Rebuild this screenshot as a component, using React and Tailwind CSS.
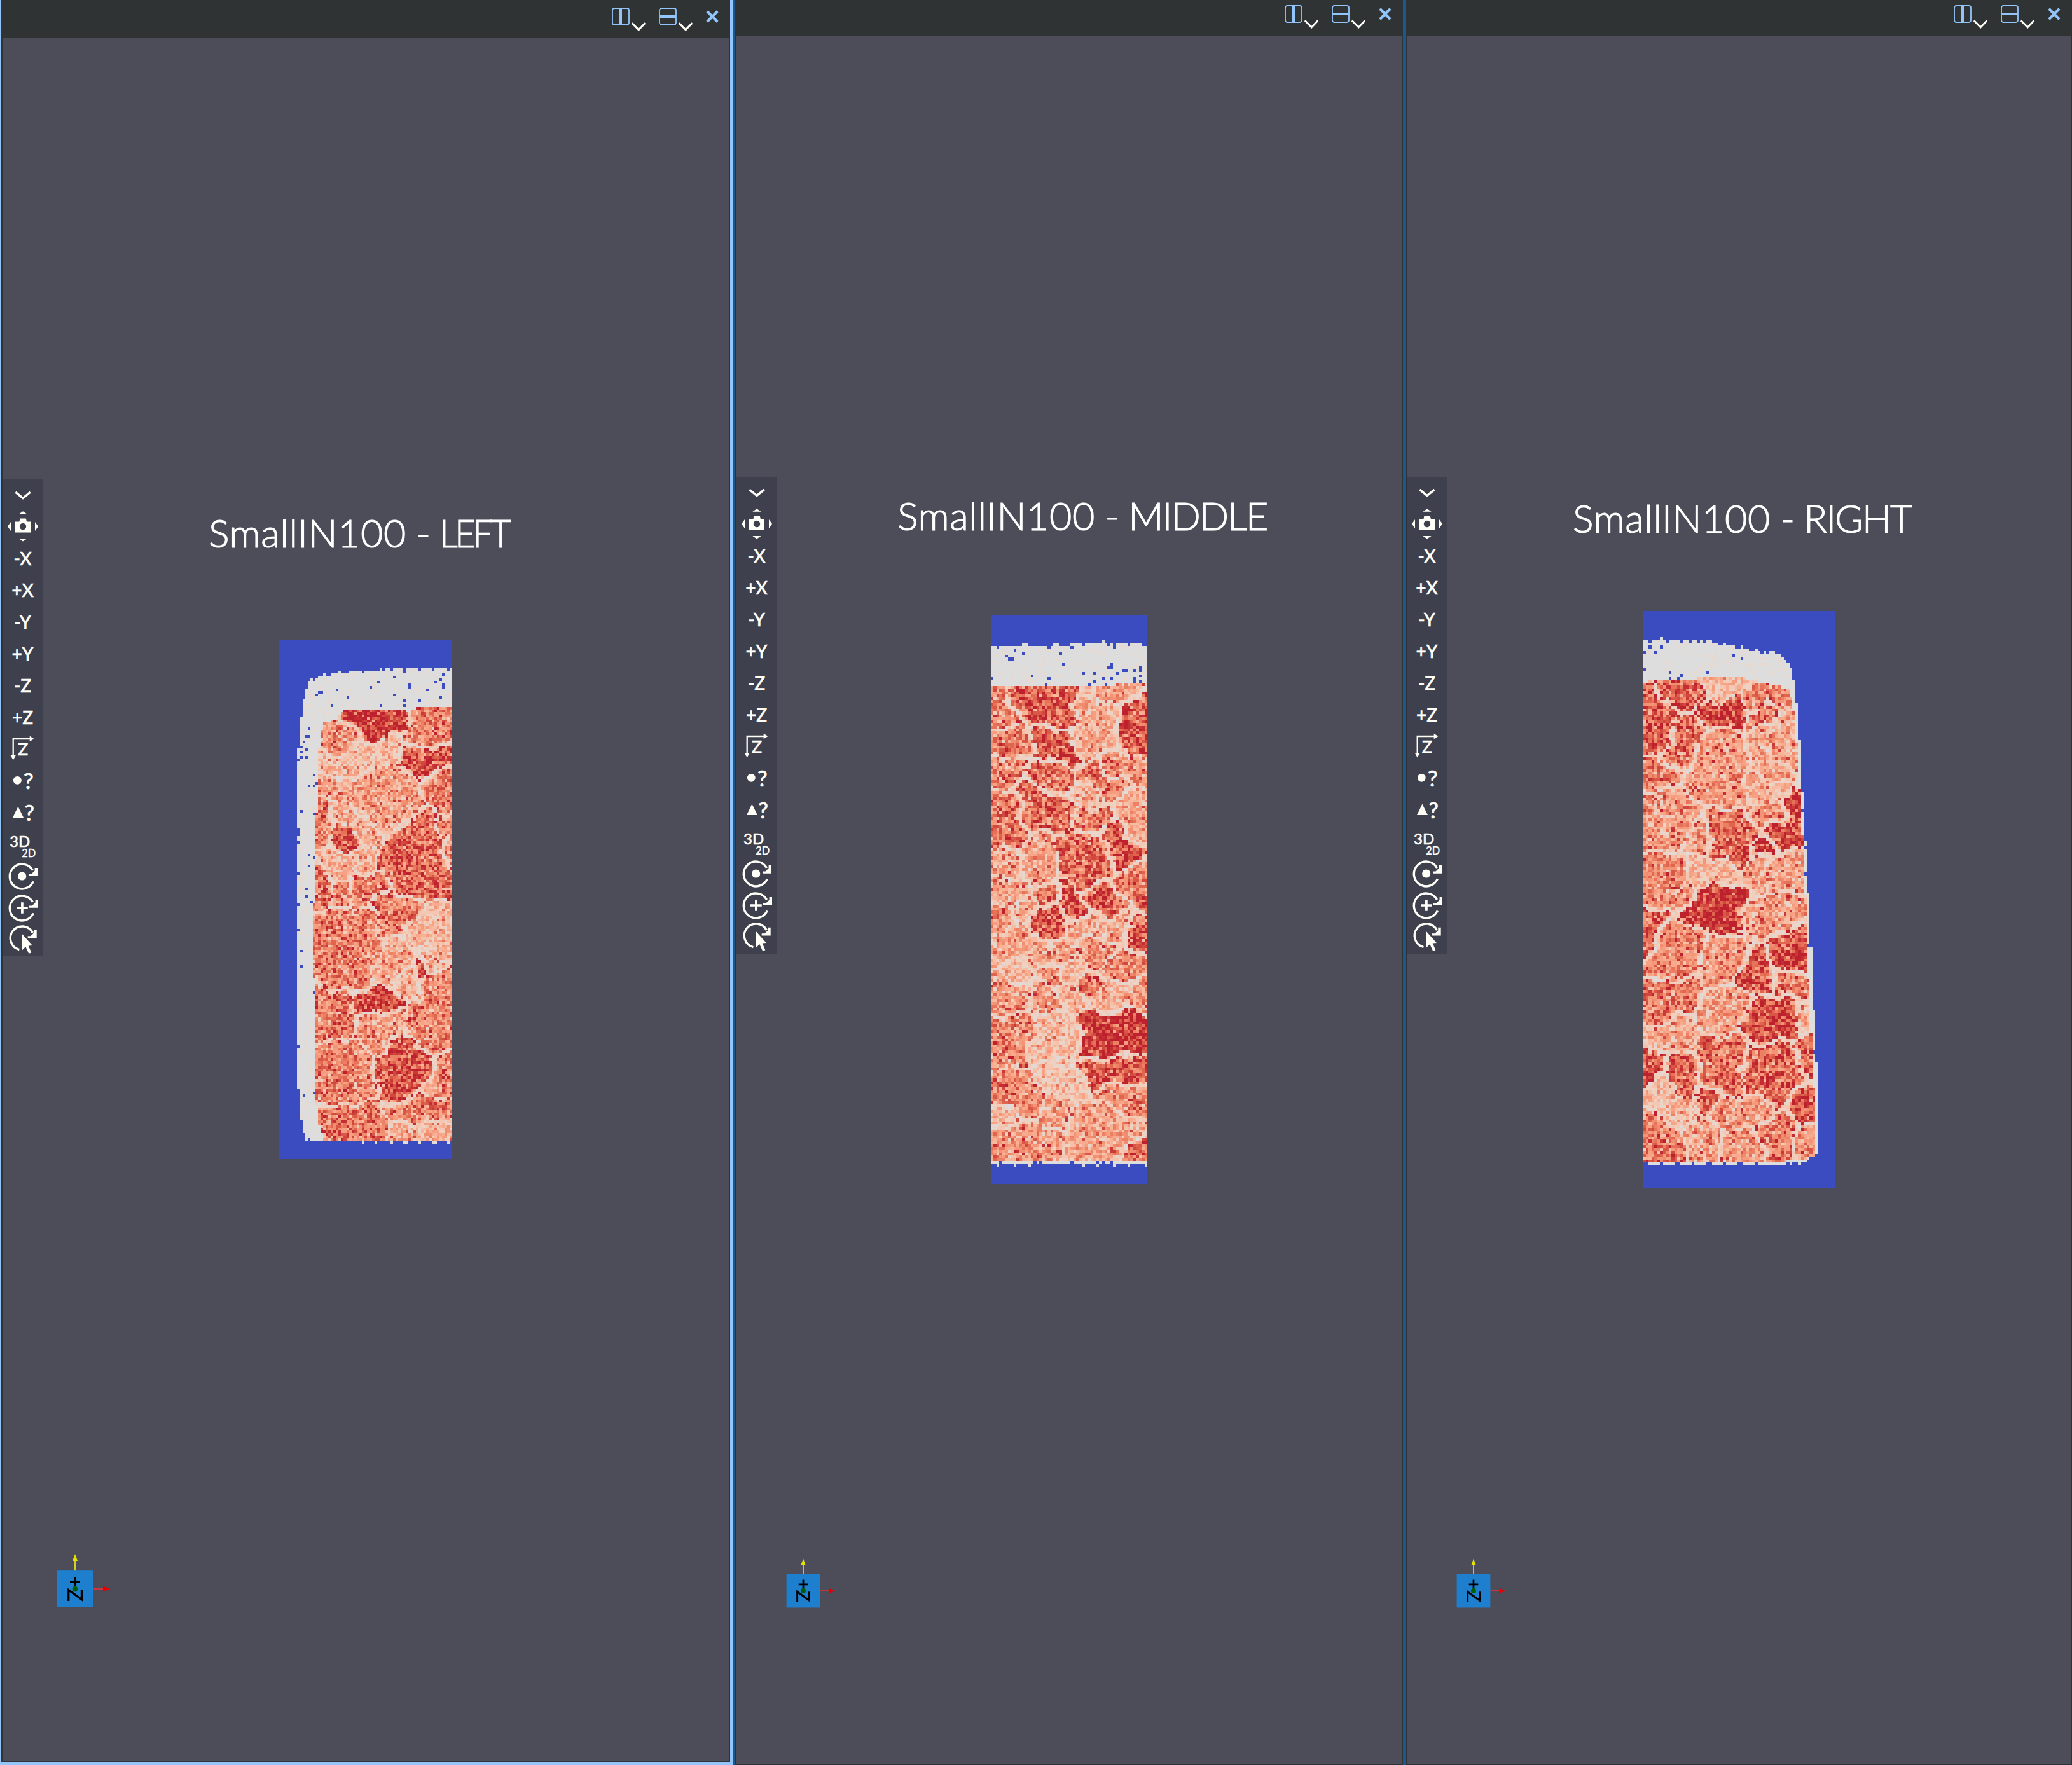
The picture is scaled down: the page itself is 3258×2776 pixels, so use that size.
import React, { useMemo } from "react";

const INK = "#fffff8";

/* ---------- orientation map data ----------
   Each slice is a cols x rows voxel grid. Outlines and grains are given in
   survey units; `origin` and `cell` convert them to voxel coordinates.
   A grain is [level, x1, y1, x2, y2, ...]. */
const LEFT_SLICE = {
  cols: 67, rows: 201, origin: [27, 30], cell: [12.18, 7.49], seed: 11, specks: 0.03,
  outer: [[860, 113], [550, 113], [490, 120], [370, 122], [320, 125], [270, 130], [210, 137], [162, 152], [150, 190], [136, 220], [125, 280], [113, 395], [113, 1280], [125, 1390], [137, 1452], [150, 1482], [860, 1487]],
  inner: [[860, 225], [330, 235], [300, 262], [234, 270], [222, 320], [210, 370], [210, 500], [198, 560], [198, 780], [186, 800], [186, 1000], [198, 1040], [198, 1330], [210, 1430], [240, 1480], [860, 1480]],
  grains: [
    [0.88, 370, 245, 450, 275, 530, 270, 570, 250, 480, 300],
    [0.55, 260, 300, 300, 335, 335, 300],
    [0.6, 700, 250, 760, 240, 800, 290, 700, 310],
    [0.8, 640, 370, 720, 380, 800, 375],
    [0.32, 300, 395, 400, 370, 480, 355, 540, 350, 240, 400],
    [0.45, 240, 435, 320, 480, 430, 510, 500, 540, 600, 480, 560, 430, 640, 510, 470, 450],
    [0.64, 780, 460, 820, 500, 820, 430],
    [0.6, 225, 520, 230, 590],
    [0.75, 320, 590, 350, 610],
    [0.42, 330, 530, 430, 580],
    [0.72, 700, 560, 620, 640, 560, 690, 700, 690, 760, 610, 640, 750, 740, 730, 760, 670],
    [0.6, 825, 570, 835, 640],
    [0.34, 280, 680, 350, 700, 420, 680],
    [0.68, 220, 720, 225, 770],
    [0.6, 410, 735, 480, 740, 400, 760],
    [0.6, 320, 772],
    [0.6, 260, 850, 340, 850, 430, 850, 250, 950, 350, 960, 450, 930, 400, 1000, 290, 1000],
    [0.62, 540, 800, 600, 820, 550, 840, 640, 810],
    [0.32, 750, 850, 800, 900, 780, 930, 700, 870],
    [0.4, 560, 950, 620, 970, 530, 1000],
    [0.88, 690, 985],
    [0.4, 640, 990, 620, 1020],
    [0.4, 740, 970],
    [0.62, 240, 1080, 300, 1090, 250, 1150, 340, 1130],
    [0.88, 430, 1085, 500, 1070, 540, 1078],
    [0.5, 440, 1150, 560, 1140, 480, 1190],
    [0.58, 760, 1020, 780, 1100, 750, 1180, 820, 1150, 690, 1130],
    [0.6, 280, 1240, 350, 1280, 250, 1300, 350, 1335, 420, 1300, 390, 1240],
    [0.78, 600, 1225, 530, 1280, 620, 1300, 680, 1270, 600, 1335],
    [0.56, 790, 1330, 820, 1280],
    [0.68, 330, 1430, 420, 1420, 290, 1460, 480, 1450],
    [0.6, 620, 1405, 720, 1390, 810, 1400],
    [0.4, 600, 1460, 720, 1465, 810, 1460],
  ],
};

const MIDDLE_SLICE = {
  cols: 55, rows: 200, origin: [54, 29], cell: [13.4, 7.545], seed: 27, specks: 0.04,
  outer: [[40, 111], [440, 111], [445, 105], [800, 105], [800, 1486], [40, 1486]],
  inner: [[40, 217], [800, 213], [800, 1478], [40, 1478]],
  grains: [
    [0.6, 90, 250, 110, 310],
    [0.76, 190, 245, 260, 270, 300, 300, 370, 250, 400, 290, 420, 240],
    [0.78, 300, 350, 370, 370, 420, 395, 290, 375],
    [0.62, 90, 370, 170, 350, 140, 400, 210, 385],
    [0.38, 500, 260, 540, 320, 490, 370, 590, 350, 600, 290],
    [0.5, 620, 235, 660, 245],
    [0.78, 700, 280, 770, 290, 710, 350, 760, 370],
    [0.68, 280, 450, 350, 450, 400, 480],
    [0.6, 90, 440, 140, 450, 190, 430],
    [0.68, 230, 500, 260, 560, 340, 555, 400, 570, 400, 535],
    [0.64, 90, 540, 150, 540, 90, 610, 150, 610],
    [0.62, 520, 455, 600, 490, 640, 480],
    [0.52, 640, 430, 740, 450],
    [0.34, 480, 500, 530, 520],
    [0.6, 490, 575, 580, 560],
    [0.4, 740, 520, 740, 590, 700, 550],
    [0.8, 630, 610, 680, 650],
    [0.72, 430, 640, 500, 640, 450, 700, 520, 700, 550, 660, 490, 730],
    [0.5, 290, 650, 240, 690, 300, 710],
    [0.42, 110, 690, 150, 690],
    [0.66, 740, 740, 780, 750],
    [0.48, 100, 760, 160, 770],
    [0.8, 430, 790, 460, 810, 400, 775],
    [0.74, 570, 790, 600, 805, 540, 780],
    [0.66, 340, 770],
    [0.8, 280, 840, 330, 860, 350, 830],
    [0.6, 100, 830],
    [0.42, 200, 820],
    [0.4, 470, 860, 560, 850],
    [0.42, 650, 860],
    [0.76, 740, 880, 780, 890],
    [0.42, 170, 910, 100, 920, 200, 880],
    [0.52, 400, 920],
    [0.46, 290, 940],
    [0.55, 530, 910, 560, 930],
    [0.6, 640, 970, 720, 950],
    [0.35, 180, 970],
    [0.52, 110, 1020, 180, 1040, 90, 1050],
    [0.6, 330, 985],
    [0.35, 430, 980],
    [0.52, 300, 1030, 340, 1055],
    [0.62, 520, 1010],
    [0.38, 640, 1030, 590, 1060],
    [0.48, 780, 1040],
    [0.58, 90, 1140, 190, 1130, 140, 1180, 90, 1200],
    [0.3, 350, 1110, 320, 1180, 420, 1150],
    [0.4, 420, 1040],
    [0.9, 540, 1110, 620, 1110, 700, 1115, 520, 1170, 620, 1170, 740, 1150, 780, 1150],
    [0.78, 550, 1240, 640, 1240, 740, 1235],
    [0.56, 110, 1270, 190, 1290, 210, 1320, 100, 1310],
    [0.56, 640, 1310, 720, 1320],
    [0.46, 380, 1335],
    [0.24, 350, 1240, 420, 1280],
    [0.42, 500, 1370, 600, 1360, 680, 1400, 500, 1440, 620, 1450],
    [0.5, 130, 1410, 220, 1430, 300, 1450],
    [0.36, 110, 1360],
    [0.72, 740, 1460, 770, 1455],
  ],
};

const RIGHT_SLICE = {
  cols: 67, rows: 201, origin: [67, 19], cell: [13.57, 7.61], seed: 5, specks: 0.025,
  outer: [[50, 95], [370, 97], [420, 106], [530, 115], [720, 133], [745, 150], [772, 175], [786, 230], [800, 290], [813, 420], [826, 560], [840, 690], [853, 820], [867, 980], [880, 1140], [893, 1260], [893, 1455], [840, 1480], [740, 1487], [50, 1485]],
  inner: [[50, 208], [180, 200], [530, 195], [755, 225], [784, 290], [798, 410], [810, 520], [824, 650], [836, 800], [846, 980], [862, 1150], [876, 1300], [876, 1465], [730, 1478], [50, 1478]],
  grains: [
    [0.74, 100, 250, 140, 290, 100, 350, 150, 350],
    [0.74, 190, 230, 270, 220, 310, 245],
    [0.86, 390, 285, 450, 295, 510, 270, 500, 300],
    [0.32, 420, 230, 480, 225],
    [0.55, 590, 260, 700, 250],
    [0.66, 600, 300, 660, 293],
    [0.64, 260, 360, 230, 400, 290, 335],
    [0.52, 400, 370, 470, 360, 520, 420, 400, 440, 460, 480, 340, 480, 490, 500],
    [0.44, 640, 350, 740, 320, 770, 400, 720, 380],
    [0.46, 610, 410, 690, 450],
    [0.4, 620, 490, 700, 500],
    [0.64, 110, 460, 160, 460],
    [0.48, 110, 540, 170, 520, 250, 540, 240, 600, 120, 600],
    [0.86, 780, 530, 770, 580, 720, 610, 780, 620, 690, 605],
    [0.9, 640, 650],
    [0.7, 440, 590, 500, 590, 550, 600, 430, 650, 520, 660],
    [0.6, 640, 560, 690, 550],
    [0.5, 330, 620],
    [0.55, 130, 720, 220, 720, 250, 765, 130, 770],
    [0.36, 340, 710, 440, 710],
    [0.9, 350, 790, 430, 775, 510, 790, 470, 840, 390, 820, 320, 810],
    [0.46, 610, 720, 700, 720, 780, 690, 650, 690],
    [0.52, 600, 830, 700, 810, 720, 840],
    [0.72, 100, 840, 90, 890],
    [0.6, 190, 890, 250, 890, 220, 960, 290, 910, 160, 950],
    [0.8, 770, 890, 740, 930, 810, 930, 800, 955],
    [0.78, 590, 960, 600, 1000, 570, 980, 630, 990],
    [0.5, 420, 920, 440, 980, 490, 940],
    [0.64, 100, 1050, 180, 1040, 260, 1040, 150, 1080],
    [0.46, 440, 1060, 400, 1090, 500, 1050],
    [0.82, 640, 1080, 700, 1090, 760, 1110, 640, 1130, 760, 1075],
    [0.6, 740, 1000, 810, 1010],
    [0.4, 820, 1090],
    [0.8, 100, 1210, 80, 1240],
    [0.42, 160, 1150, 250, 1135],
    [0.7, 270, 1230, 290, 1280, 240, 1240],
    [0.66, 380, 1200, 440, 1230, 500, 1200, 400, 1260, 480, 1270],
    [0.78, 360, 1300],
    [0.72, 620, 1200, 740, 1200, 590, 1250, 690, 1280, 760, 1240],
    [0.72, 850, 1210, 840, 1190],
    [0.76, 830, 1330],
    [0.32, 160, 1290, 200, 1340, 260, 1360],
    [0.62, 140, 1390, 190, 1420],
    [0.5, 480, 1350, 600, 1350],
    [0.64, 660, 1410, 720, 1390, 720, 1440],
    [0.46, 320, 1400, 400, 1440],
    [0.5, 480, 1440, 580, 1430],
    [0.55, 840, 1420],
  ],
};

/* ---------- rasteriser ---------- */
function makeRandom(seed) {
  let s = seed * 7919 + 13;
  return () => {
    s = (s + 0x6d2b79f5) | 0;
    let t = Math.imul(s ^ (s >>> 15), 1 | s);
    t = (t + Math.imul(t ^ (t >>> 7), 61 | t)) ^ t;
    return ((t ^ (t >>> 14)) >>> 0) / 4294967296;
  };
}

function inside(poly, x, y) {
  let hit = false;
  for (let i = 0, j = poly.length - 1; i < poly.length; j = i++) {
    const [xi, yi] = poly[i];
    const [xj, yj] = poly[j];
    if (yi > y !== yj > y && x < ((xj - xi) * (y - yi)) / (yj - yi) + xi) hit = !hit;
  }
  return hit;
}

const RAMP = [
  [221, 221, 221], [240, 207, 190], [246, 187, 161], [247, 162, 133],
  [241, 141, 111], [224, 101, 79], [201, 58, 55], [184, 20, 42],
];

function rampColor(t) {
  const p = Math.max(0, Math.min(0.9999, t)) * (RAMP.length - 1);
  const i = Math.floor(p);
  const f = Math.round((p - i) * 3) / 3;
  const c = RAMP[i].map((v, k) => Math.round(v + (RAMP[i + 1][k] - v) * f));
  return `rgb(${c.join(",")})`;
}

function rasterise(slice) {
  const rnd = makeRandom(slice.seed);
  const [ox, oy] = slice.origin;
  const [cw, ch] = slice.cell;
  const pts = [];
  slice.grains.forEach((g, id) => {
    for (let k = 1; k < g.length; k += 2) {
      pts.push([(g[k] - ox) / cw, (g[k + 1] - oy) / ch, id]);
    }
  });
  const paths = {};
  for (let r = 0; r < slice.rows; r++) {
    let runStart = 0;
    let runColor = null;
    for (let c = 0; c <= slice.cols; c++) {
      let color = null;
      if (c < slice.cols) {
        const n1 = rnd();
        const n2 = rnd();
        const x = ox + (c + 0.5) * cw;
        const y = oy + (r + 0.5) * ch;
        const ragged = (Math.sin(c * 2.3) + Math.sin(c * 1.1 + 2)) * 2.6;
        if (inside(slice.inner, x, y)) {
          const gx = c + 0.5 + Math.sin(r * 0.45 + c * 0.2) * 0.6;
          const gy = r + 0.5 + Math.sin(c * 0.5 + r * 0.15) * 0.7;
          const best = {};
          for (const [px, py, id] of pts) {
            const d = Math.hypot(px - gx, py - gy);
            if (best[id] === undefined || d < best[id]) best[id] = d;
          }
          let d1 = 1e9, d2 = 1e9, id1 = 0;
          for (const id in best) {
            if (best[id] < d1) { d2 = d1; d1 = best[id]; id1 = id; }
            else if (best[id] < d2) d2 = best[id];
          }
          const gap = d2 - d1;
          const level = slice.grains[id1][0];
          if (gap < 1.15 && n2 < 0.93) color = rampColor(0.02 + n1 * 0.2);
          else if (gap < 2.4 && n2 < 0.4) color = rampColor(0.1 + n1 * 0.4);
          else {
            let v = level - 0.01 + (n1 - 0.5) * 0.46;
            if (n2 > 0.84) v += 0.24;
            if (n2 < 0.22) v -= 0.26;
            color = rampColor(Math.max(0.08, Math.min(0.97, v)));
          }
        } else if (inside(slice.outer, x, y + ragged)) {
          color = n1 < slice.specks ? null : n2 < 0.12 ? "rgb(230,217,210)" : "rgb(221,221,221)";
        }
      }
      if (color !== runColor || c === slice.cols) {
        if (runColor) {
          paths[runColor] = (paths[runColor] || "") + `M${runStart} ${r}H${c}V${r + 1}H${runStart}Z`;
        }
        runStart = c;
        runColor = color;
      }
    }
  }
  return Object.entries(paths);
}

function Slice({ slice, className }) {
  const layers = useMemo(() => rasterise(slice), [slice]);
  return (
    <svg
      className={`block shrink-0 bg-[#3b4cc0] ${className}`}
      viewBox={`0 0 ${slice.cols} ${slice.rows}`}
      preserveAspectRatio="none"
      shapeRendering="crispEdges"
    >
      {layers.map(([color, d]) => (
        <path key={color} d={d} fill={color} />
      ))}
    </svg>
  );
}

/* ---------- header ---------- */
function Chevron() {
  return (
    <svg className="mt-[23px] ml-[3px] block h-[15px] w-[22px]" viewBox="0 0 22 15" fill="none" stroke={INK} strokeWidth="3">
      <path d="M0.8 1.2 L11.2 11.8 L21.4 1.2" />
    </svg>
  );
}

function SplitButton({ horizontal }) {
  return (
    <button className="flex items-start">
      <svg className="block size-7" viewBox="0 0 28 28" fill="none" stroke="#93c5fa">
        <rect x="1" y="1" width="26" height="26" rx="3.2" strokeWidth="1.8" />
        <path d={horizontal ? "M1 14H27" : "M14 1V27"} strokeWidth="4" />
      </svg>
      <Chevron />
    </button>
  );
}

function Header({ className }) {
  return (
    <div className={`flex shrink-0 items-start justify-end bg-[#2f3333] pr-[18px] ${className}`}>
      <SplitButton />
      <div className="w-[21px]" />
      <SplitButton horizontal />
      <button className="mt-1 ml-[21px]">
        <svg className="block size-5" viewBox="0 0 20 20" fill="none" stroke="#93c5fa" strokeWidth="4.2">
          <path d="M1.8 1.8 L18.2 18.2 M18.2 1.8 L1.8 18.2" />
        </svg>
      </button>
    </div>
  );
}

/* ---------- tool strip ---------- */
function Tool({ children }) {
  return (
    <svg className="block h-[50px] w-16" viewBox="0 0 64 50" fill={INK} fontFamily="Lato, sans-serif">
      {children}
    </svg>
  );
}

function AxisTool({ label }) {
  return (
    <button className="flex h-[50px] w-16 items-center justify-center pr-px pb-[3px] font-['Lato',sans-serif] text-[28px] leading-none font-medium text-[#fffff8] [-webkit-text-stroke:0.5px_#fffff8]">
      {label}
    </button>
  );
}

function RotateArrow({ dx = 0, dy = 0 }) {
  return <path transform={`translate(${dx} ${dy})`} d="M55 11V23.7H41V20.4H45.5L50.6 15.5V11Z" />;
}

function ToolStrip() {
  return (
    <div className="absolute top-[694px] left-0 flex w-16 flex-col bg-[#3f404d]">
      <Tool>
        <path d="M20.4 20.1 L32 29.6 L43.6 20.1" fill="none" stroke={INK} strokeWidth="3.4" />
      </Tool>
      <Tool>
        <path d="M32 0.2L38.7 4.7H25.3ZM32 47.6L25.3 43H38.7ZM8 24L13 17V31ZM56 24L51 17V31Z" />
        <path fillRule="evenodd" d="M20 16.6H26.4L27.4 11.6H36.8L38 16.6H44V33.5H20ZM32 18.8A5.2 5.2 0 1 0 32 29.2A5.2 5.2 0 1 0 32 18.8Z" />
      </Tool>
      <AxisTool label="-X" />
      <AxisTool label="+X" />
      <AxisTool label="-Y" />
      <AxisTool label="+Y" />
      <AxisTool label="-Z" />
      <AxisTool label="+Z" />
      <Tool>
        <path d="M16.7 35V8H43" fill="none" stroke={INK} strokeWidth="2.3" />
        <path d="M49.5 8L42.7 3.7V12.3ZM16.7 41.4L12.6 34H20.8Z" />
        <text x="23.7" y="33.7" fontSize="27.5" stroke={INK} strokeWidth="0.5">Z</text>
      </Tool>
      <Tool>
        <circle cx="23.3" cy="23.3" r="6.4" />
        <text x="33" y="36.6" fontSize="35" stroke={INK} strokeWidth="0.7">?</text>
      </Tool>
      <Tool>
        <path d="M24.4 14.6L33 32H16Z" />
        <text x="34.3" y="36.6" fontSize="35" stroke={INK} strokeWidth="0.7">?</text>
      </Tool>
      <Tool>
        <text x="11" y="28.3" fontSize="24" stroke={INK} strokeWidth="0.6">3D</text>
        <text x="30.3" y="44.4" fontSize="16.3" stroke={INK} strokeWidth="0.4">2D</text>
      </Tool>
      <Tool>
        <path d="M48.4 32.4A19.4 19.4 0 1 1 47.6 15" fill="none" stroke={INK} strokeWidth="3.4" />
        <circle cx="30.7" cy="24" r="6.6" />
        <RotateArrow />
      </Tool>
      <Tool>
        <path d="M48.4 32.4A19.4 19.4 0 1 1 47.6 15" fill="none" stroke={INK} strokeWidth="3.4" />
        <path d="M22 24H39.8M30.9 15.2V32.8" stroke={INK} strokeWidth="3.7" />
        <RotateArrow dx={1} />
      </Tool>
      <Tool>
        <path d="M26.4 39.6A18.6 18.6 0 1 1 47.4 13" fill="none" stroke={INK} strokeWidth="3.4" />
        <path d="M31 15.3V40.3L36.3 35L41.3 46L45.3 44.3L40.7 33.6L46.9 32.9Z" />
        <RotateArrow dx={-1.3} dy={-2.2} />
      </Tool>
    </div>
  );
}

/* ---------- orientation gizmo ---------- */
function Gizmo({ className }) {
  return (
    <svg className={`absolute block ${className}`} viewBox="-60 -60 120 120">
      <path d="M0 -28V-46" stroke="#dcd626" strokeWidth="1.9" />
      <path d="M0 -55L4 -44H-4Z" fill="#e3df00" />
      <path d="M28 0H46" stroke="#cf3340" strokeWidth="1.9" />
      <path d="M55 0L44 -4.4V4.4Z" fill="#e60000" />
      <rect x="-28.8" y="-28.8" width="57.6" height="57.6" fill="#1e7fcf" />
      <path d="M0 -19V-3M-8 -11H8" stroke="#000" strokeWidth="3" />
      <path d="M-10.2 19V1.6L10.4 16.6V1.4" fill="none" stroke="#000" strokeWidth="3.2" />
      <circle r="4.4" fill="#005f00" />
    </svg>
  );
}

function Title({ tail, className, tailClassName }) {
  return (
    <h2 className={`flex h-[61px] shrink-0 font-['Lato',sans-serif] text-[61px] leading-none font-light whitespace-pre text-white [-webkit-text-stroke:1.1px_white] ${className}`}>
      <span className="tracking-[0.6px]">SmallIN100</span>
      <span className="tracking-[-1.2px]"> - </span>
      <span className={tailClassName}>{tail}</span>
    </h2>
  );
}

export default function App() {
  return (
    <main className="flex h-[2776px] w-[3258px] overflow-hidden bg-[#303336]">
      <section className="flex w-[1152px] shrink-0 flex-col border-r-4 border-b-4 border-l-2 border-[#93c5fa] bg-[#303336]">
        <Header className="h-[60px] pt-3" />
        <div className="relative mr-0.5 mb-0.5 ml-0.5 flex flex-1 flex-col bg-[#4d4d59]">
          <ToolStrip />
          <Title tail="LEFT" className="mt-[747px] ml-[324px]" tailClassName="origin-left scale-x-[0.93] tracking-[-5px]" />
          <Slice slice={LEFT_SLICE} className="mt-[138px] ml-[435px] h-[817px] w-[272px]" />
          <Gizmo className="top-[2379px] left-[54px] size-[120px]" />
        </div>
      </section>
      <section className="flex w-[1054px] shrink-0 flex-col border-l-4 border-[#1b588f] bg-[#303336]">
        <Header className="h-14 pt-2" />
        <div className="relative mr-0.5 mb-0.5 ml-0.5 flex flex-1 flex-col bg-[#4d4d59]">
          <ToolStrip />
          <Title tail="MIDDLE" className="mt-[724px] ml-[253px]" tailClassName="tracking-[-2px]" />
          <Slice slice={MIDDLE_SLICE} className="mt-[126px] ml-[400px] h-[895px] w-[246px]" />
          <Gizmo className="top-[2391px] left-[50px] size-[110px]" />
        </div>
      </section>
      <section className="flex w-[1052px] shrink-0 flex-col border-l-4 border-[#1b588f] bg-[#303336]">
        <Header className="h-14 pt-2" />
        <div className="relative mr-0.5 mb-0.5 ml-0.5 flex flex-1 flex-col bg-[#4d4d59]">
          <ToolStrip />
          <Title tail="RIGHT" className="mt-[728px] ml-[261px]" tailClassName="tracking-[-2px]" />
          <Slice slice={RIGHT_SLICE} className="mt-[116px] ml-[371px] h-[908px] w-[303px]" />
          <Gizmo className="top-[2391px] left-[50px] size-[110px]" />
        </div>
      </section>
    </main>
  );
}
